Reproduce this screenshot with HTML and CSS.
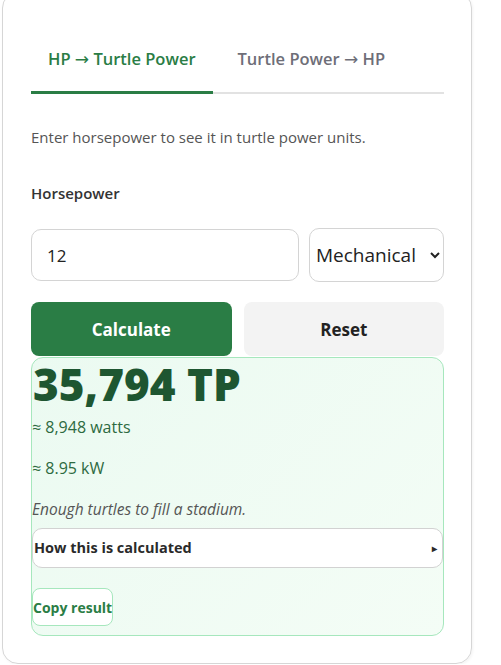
FILE: index.html
```html
<!DOCTYPE html>
<html lang="en">
<head>
    <meta charset="UTF-8">
    <meta name="viewport" content="width=device-width, initial-scale=1.0">
    <title>Turtle Power Converter</title>
    <link rel="stylesheet" href="styles.css">
</head>
<body>
    <div class="card">
        <div class="tabs">
            <button class="tab active">HP <span class="arrow">→</span> Turtle Power</button>
            <button class="tab">Turtle Power <span class="arrow">→</span> HP</button>
        </div>

        <p class="intro">Enter horsepower to see it in turtle power units.</p>

        <label class="field-label" for="hp-input">Horsepower</label>
        <div class="input-row">
            <input type="text" id="hp-input" class="text-input" value="12">
            <select class="unit-select">
                <option>Mechanical</option>
                <option>Metric</option>
                <option>Electric</option>
            </select>
        </div>

        <div class="actions">
            <button class="btn btn-primary">Calculate</button>
            <button class="btn btn-secondary">Reset</button>
        </div>

        <div class="result">
            <h2 class="result-value">35,794 TP</h2>
            <p class="result-sub first">≈ 8,948 watts</p>
            <p class="result-sub">≈ 8.95 kW</p>
            <p class="result-note">Enough turtles to fill a stadium.</p>
            <details class="how">
                <summary>How this is calculated</summary>
                <p>1 HP ≈ 745.7 W, one turtle ≈ 0.25 W.</p>
            </details>
            <button class="copy-btn">Copy result</button>
        </div>
    </div>
</body>
</html>
```

FILE: styles.css
```css
body {
    margin: 0;
    font-family: 'Open Sans', 'Noto Sans', sans-serif;
    color: #333;
    background: #fff;
}

.card {
    width: 413px;
    margin: -8px 0 0 2px;
    padding: 32px 27px 27px 28px;
    border: 1px solid #d6d6d6;
    border-radius: 16px;
    box-shadow: 1px 1px 3px rgba(0, 0, 0, 0.05);
}

.tabs {
    display: flex;
    gap: 8px;
    border-bottom: 2px solid #e2e2e2;
}

.tab {
    font-family: inherit;
    font-size: 16.5px;
    font-weight: 600;
    color: #6e6e78;
    background: none;
    border: none;
    border-bottom: 3px solid transparent;
    margin-bottom: -2px;
    padding: 22px 17px 20px;
    line-height: 24px;
    cursor: pointer;
}

.tab .arrow {
    font-family: 'DejaVu Sans', sans-serif;
    font-size: 17px;
    font-weight: 400;
    line-height: 1;
}

.tab.active {
    color: #2a7d45;
    border-bottom-color: #2a7d45;
}

.intro {
    margin: 32px 0 0;
    font-size: 15px;
    line-height: 22px;
    color: #555;
}

.field-label {
    display: block;
    margin-top: 34px;
    font-size: 15px;
    font-weight: 600;
    line-height: 22px;
    color: #333;
}

.input-row {
    display: flex;
    gap: 10px;
    margin-top: 25px;
}

.text-input {
    flex: 1;
    min-width: 0;
    height: 52px;
    box-sizing: border-box;
    padding: 0 15px;
    font-family: inherit;
    font-size: 17px;
    color: #222;
    border: 1px solid #d4d4d4;
    border-radius: 10px;
}

.unit-select {
    width: 135px;
    height: 54px;
    margin-top: -1px;
    padding: 0 0 0 2px;
    font-family: inherit;
    font-size: 19px;
    color: #222;
    background: #fff;
    border: 1px solid #d4d4d4;
    border-radius: 10px;
}

.actions {
    display: flex;
    gap: 12px;
    margin-top: 20px;
}

.btn {
    flex: 1;
    height: 54px;
    font-family: inherit;
    font-size: 17px;
    font-weight: 700;
    border: none;
    border-radius: 8px;
    cursor: pointer;
}

.btn-primary {
    background: #2a7d45;
    color: #fff;
}

.btn-secondary {
    background: #f3f3f3;
    color: #222;
}

.result {
    margin-top: 1px;
    border: 1px solid #a6e7bd;
    border-radius: 12px;
    background: linear-gradient(135deg, #ebfaf1, #f4fdf6);
    padding-bottom: 9px;
}

.result-value {
    margin: 0;
    padding-left: 1px;
    font-size: 44px;
    font-weight: 800;
    line-height: 52px;
    color: #1e5631;
}

.result-sub {
    margin: 17px 0 0;
    font-size: 16px;
    line-height: 24px;
    color: #2d6a41;
}

.result-sub.first {
    margin-top: 5px;
}

.result-note {
    margin: 17px 0 0;
    font-size: 15.5px;
    font-style: italic;
    line-height: 24px;
    color: #555;
}

.how {
    margin-top: 7px;
    background: #fff;
    border: 1px solid #d2d2d2;
    border-radius: 10px;
}

.how summary {
    display: flex;
    justify-content: space-between;
    align-items: center;
    padding: 8px 5px 8px 1px;
    font-size: 14.5px;
    font-weight: 700;
    line-height: 22px;
    color: #2a2a2a;
    list-style: none;
    cursor: pointer;
}

.how summary::-webkit-details-marker {
    display: none;
}

.how summary::after {
    content: '▸';
    font-size: 10px;
}

.how p {
    margin: 0;
    padding: 0 8px 10px;
    font-size: 14px;
}

.copy-btn {
    display: block;
    margin-top: 20px;
    height: 38px;
    padding: 0;
    font-family: inherit;
    font-size: 14px;
    font-weight: 700;
    color: #2a7d45;
    background: #fff;
    border: 1px solid #a6e7bd;
    border-radius: 8px;
    cursor: pointer;
}
```
